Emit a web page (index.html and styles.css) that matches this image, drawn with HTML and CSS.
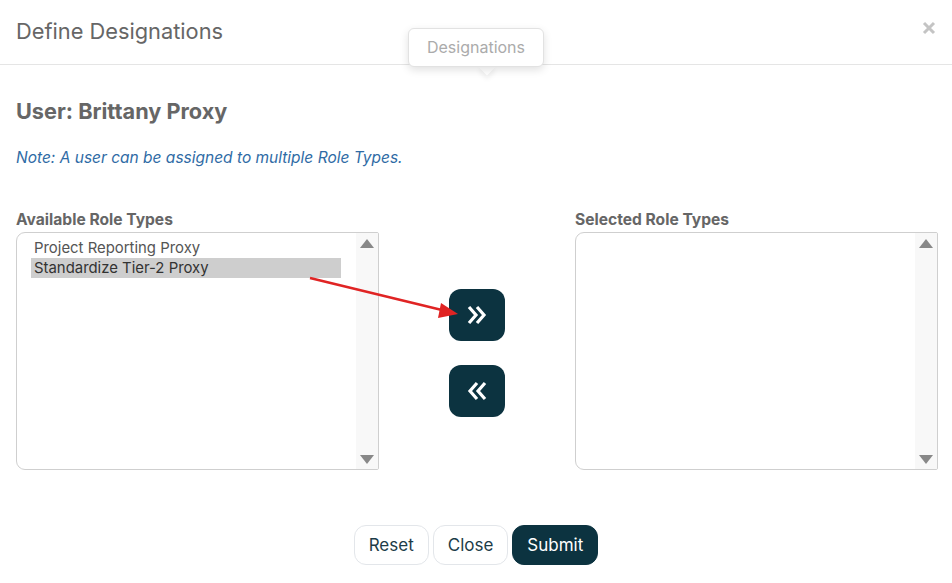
FILE: index.html
```html
<!DOCTYPE html>
<html lang="en">
<head>
    <meta charset="UTF-8">
    <meta name="viewport" content="width=device-width, initial-scale=1.0">
    <title>Define Designations</title>
    <link rel="stylesheet" href="styles.css">
</head>
<body>
    <div class="modal">
        <div class="modal-header">
            <h1>Define Designations</h1>
            <svg class="close-x" width="14" height="14" viewBox="0 0 14 14">
                <path d="M2 2 L12 12 M12 2 L2 12" stroke="#c4c4c4" stroke-width="3" fill="none"/>
            </svg>
        </div>
        <div class="tip">Designations</div>

        <div class="modal-body">
            <h2>User: Brittany Proxy</h2>
            <p class="note">Note: A user can be assigned to multiple Role Types.</p>

            <div class="picker">
                <div class="label">Available Role Types</div>
                <div></div>
                <div class="label">Selected Role Types</div>

                <div class="listbox">
                    <div class="options">
                        <div class="option">Project Reporting Proxy</div>
                        <div class="option selected">Standardize Tier-2 Proxy</div>
                    </div>
                    <div class="scroll">
                        <span class="tri up"></span>
                        <span class="tri down"></span>
                    </div>
                </div>

                <div class="moves">
                    <button class="move">
                        <svg width="26" height="26" viewBox="0 0 26 26"><path d="M5 5 L12 13 L5 21 M13 5 L20 13 L13 21" stroke="#fff" stroke-width="3.2" fill="none"/></svg>
                    </button>
                    <button class="move">
                        <svg width="26" height="26" viewBox="0 0 26 26"><path d="M13 5 L6 13 L13 21 M21 5 L14 13 L21 21" stroke="#fff" stroke-width="3.2" fill="none"/></svg>
                    </button>
                </div>

                <div class="listbox">
                    <div class="options"></div>
                    <div class="scroll">
                        <span class="tri up"></span>
                        <span class="tri down"></span>
                    </div>
                </div>
            </div>

            <div class="actions">
                <button class="btn">Reset</button>
                <button class="btn">Close</button>
                <button class="btn primary">Submit</button>
            </div>
        </div>

        <!-- annotation arrow -->
        <svg class="arrow" width="952" height="583" viewBox="0 0 952 583">
            <line x1="310" y1="278" x2="446" y2="311" stroke="#e02424" stroke-width="2.5"/>
            <polygon points="458,314 441,303 438,318" fill="#e02424"/>
        </svg>
    </div>
</body>
</html>
```

FILE: styles.css
```css
body {
    margin: 0;
    padding: 0;
    background: #fff;
    font-family: Inter, "Noto Sans", sans-serif;
    color: #666;
}
.modal {
    position: relative;
    width: 952px;
    height: 583px;
    overflow: hidden;
}
.modal-header {
    height: 64px;
    border-bottom: 1px solid #e5e5e5;
    display: flex;
    justify-content: space-between;
    align-items: center;
    padding: 0 16px;
    box-sizing: content-box;
}
.modal-header h1 {
    margin: 0 0 3px 0;
    font-size: 21.8px;
    font-weight: 400;
    color: #666;
}
.close-x {
    margin: 0 0 8px 0;
}
.tip {
    position: absolute;
    left: 408px;
    top: 28px;
    width: 134px;
    height: 37px;
    line-height: 37px;
    text-align: center;
    font-size: 16px;
    color: #ababab;
    background: #fff;
    border: 1px solid #e2e2e2;
    border-radius: 6px;
    box-shadow: 0 3px 8px rgba(0, 0, 0, 0.12);
}
.tip::after {
    content: "";
    position: absolute;
    left: 72px;
    bottom: -7px;
    width: 12px;
    height: 12px;
    background: #fff;
    transform: rotate(45deg);
    box-shadow: 3px 3px 5px rgba(0, 0, 0, 0.06);
    z-index: -1;
}
.modal-body {
    padding: 34px 14px 0 16px;
}
h2 {
    margin: 0;
    font-size: 21.7px;
    line-height: 24px;
    font-weight: 700;
    color: #666;
}
.note {
    margin: 26px 0 0 0;
    font-size: 15.5px;
    line-height: 18px;
    font-style: italic;
    color: #2f6ba5;
}
.picker {
    margin-top: 42px;
    display: grid;
    grid-template-columns: 363px 1fr 363px;
    grid-template-rows: 23px 238px;
}
.label {
    padding-top: 2px;
    font-size: 15.6px;
    line-height: 18px;
    font-weight: 700;
    color: #666;
}
.listbox {
    display: flex;
    border: 1px solid #cfcfcf;
    border-radius: 9px 2px 2px 9px;
    overflow: hidden;
}
.options {
    flex: 1;
    padding: 5px 13px 0 14px;
}
.option {
    width: 307px;
    padding-left: 3px;
    height: 20px;
    line-height: 20px;
    font-size: 14.9px;
    color: #555;
}
.option.selected {
    background: #cecece;
    color: #333;
}
.scroll {
    width: 22px;
    background: #f8f8f8;
    display: flex;
    flex-direction: column;
    justify-content: space-between;
    align-items: center;
    padding: 6px 0 5px 0;
}
.tri {
    width: 0;
    height: 0;
    border-left: 7px solid transparent;
    border-right: 7px solid transparent;
}
.tri.up {
    border-bottom: 9px solid #888;
}
.tri.down {
    border-top: 9px solid #888;
}
.moves {
    display: flex;
    flex-direction: column;
    align-items: center;
    justify-content: center;
    gap: 24px;
    padding-top: 4px;
}
.move {
    width: 56px;
    height: 52px;
    border: none;
    border-radius: 12px;
    background: #0c3340;
    display: flex;
    justify-content: center;
    align-items: center;
    padding: 0;
    cursor: pointer;
}
.actions {
    margin-top: 55px;
    display: flex;
    justify-content: center;
    gap: 4px;
    padding-right: 2px;
}
.btn {
    height: 40px;
    padding: 0 14px;
    background: #fff;
    border: 1px solid #e3e6ea;
    border-radius: 12px;
    font-family: Inter, "Noto Sans", sans-serif;
    font-size: 17px;
    color: #1d3c48;
    cursor: pointer;
}
.btn.primary {
    background: #0c3340;
    border-color: #0c3340;
    color: #fff;
}
.arrow {
    position: absolute;
    left: 0;
    top: 0;
    pointer-events: none;
}
```
